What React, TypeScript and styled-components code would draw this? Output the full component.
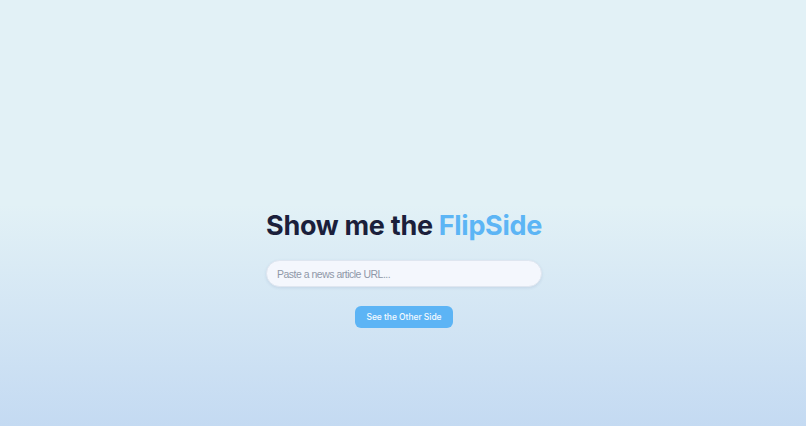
import React from "react";
import styled, { createGlobalStyle } from "styled-components";

const Global = createGlobalStyle`
  html, body { margin: 0; padding: 0; }
  body {
    font-family: Inter, "Noto Sans", sans-serif;
    background: linear-gradient(to bottom, #e2f1f6 0%, #e2f1f6 48%, #c4daf2 100%);
    min-height: 100vh;
  }
`;

const Page = styled.main`
  min-height: 100vh;
  box-sizing: border-box;
  display: flex;
  flex-direction: column;
  align-items: center;
  padding: 208px 0 0 2px;
`;

const Title = styled.h1`
  margin: 0;
  font-size: 27px;
  font-weight: 700;
  letter-spacing: -0.3px;
  color: #1b1f3b;
  line-height: 35px;
`;

const Accent = styled.span`
  color: #5cb5f5;
`;

const Input = styled.input`
  margin-top: 17px;
  width: 276px;
  height: 27px;
  box-sizing: border-box;
  border-radius: 14px;
  border: 1px solid #dfe6f0;
  background: #f4f7fd;
  box-shadow: 0 1px 3px rgba(60, 90, 140, 0.12);
  padding: 0 10px;
  font-family: "Liberation Sans", Arial, sans-serif;
  font-size: 10.5px;
  letter-spacing: -0.5px;
  color: #333;
  outline: none;
  &::placeholder { color: #8f97a8; }
`;

const Button = styled.button`
  margin-top: 19px;
  width: 98px;
  height: 22px;
  border: none;
  border-radius: 6px;
  background: #5cb4f5;
  color: #f4faff;
  font-family: Inter, sans-serif;
  font-size: 8.5px;
  font-weight: 500;
  letter-spacing: -0.05px;
  cursor: pointer;
`;

export default function App() {
  return (
    <>
      <Global />
      <Page>
        <Title>
          Show me the <Accent>FlipSide</Accent>
        </Title>
        <Input placeholder="Paste a news article URL..." />
        <Button>See the Other Side</Button>
      </Page>
    </>
  );
}
